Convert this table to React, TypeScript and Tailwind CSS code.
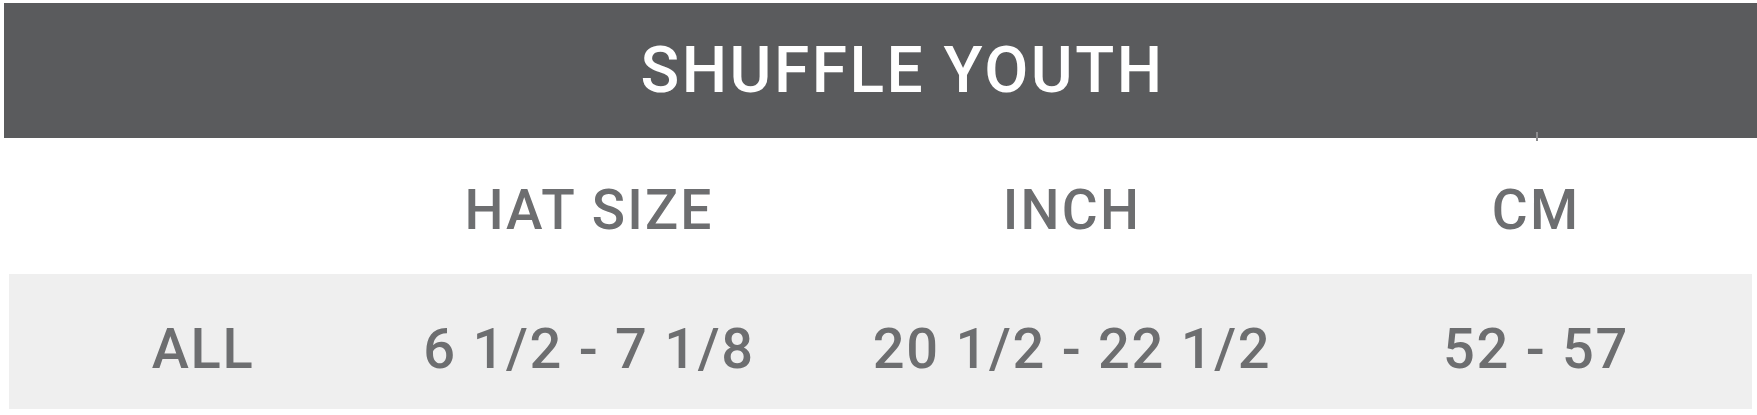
const columns = ["", "HAT SIZE", "INCH", "CM"];
const rows = [["ALL", "6 1/2 - 7 1/8", "20 1/2 - 22 1/2", "52 - 57"]];

export default function App() {
  return (
    <div
      className="relative w-[1757px] h-[415px] bg-white pt-[3px]"
      style={{ fontFamily: "Roboto, 'Noto Sans', sans-serif" }}
    >
      {/* title bar */}
      <div className="ml-[4px] h-[135px] bg-[#5a5b5d] flex items-center justify-center pl-[44px]">
        <h1 className="text-[64px] leading-none font-medium text-white tracking-[2.5px]">
          SHUFFLE YOUTH
        </h1>
      </div>
      {/* small mark under the bar */}
      <span className="absolute left-[1536px] top-[132px] w-[2px] h-[9px] bg-[#8c8c8e]" />

      <div className="ml-[9px] mr-[5px]">
        <div className="grid grid-cols-[388px_384px_582px_346px_1fr] h-[136px] pt-[8px]">
          {columns.map((c, i) => (
            <div key={i} className="flex items-center justify-center text-[55px] leading-none font-medium text-[#6d6e70] tracking-[2.2px]">
              {c}
            </div>
          ))}
        </div>
        {rows.map((r, ri) => (
          <div key={ri} className="grid grid-cols-[388px_384px_582px_346px_1fr] h-[135px] bg-[#efefef] pt-[15px]">
            {r.map((v, i) => (
              <div key={i} className="flex items-center justify-center text-[56px] leading-none font-medium text-[#6d6e70] tracking-[1.7px]">
                {v}
              </div>
            ))}
          </div>
        ))}
      </div>
    </div>
  );
}
